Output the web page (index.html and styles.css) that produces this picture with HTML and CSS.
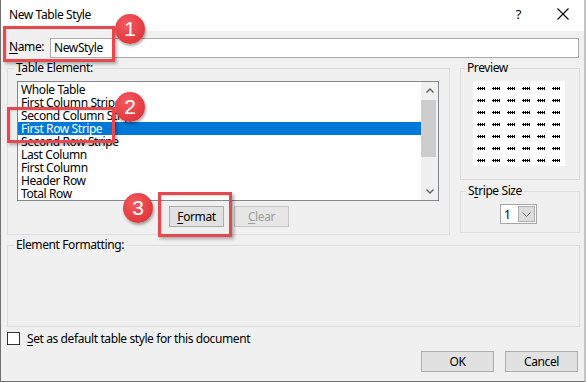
FILE: index.html
```html
<!DOCTYPE html>
<html lang="en">
<head>
    <meta charset="UTF-8">
    <title>New Table Style</title>
    <link rel="stylesheet" href="styles.css">
</head>
<body>
    <div class="dialog">
        <div class="titlebar">
            <span class="title">New Table Style</span>
            <span class="help">?</span>
            <svg class="close" width="12" height="12" viewBox="0 0 12 12">
                <path d="M0.5 0.5 L11.5 11.5 M11.5 0.5 L0.5 11.5" stroke="#000" stroke-width="1.1" fill="none"/>
            </svg>
        </div>

        <div class="content">
            <div class="name-row">
                <label class="name-label"><u>N</u>ame:</label>
                <div class="textbox">NewStyle</div>
            </div>

            <div class="middle">
                <fieldset class="group table-group">
                    <legend><u>T</u>able Element:</legend>
                    <div class="listbox">
                        <ul class="items">
                            <li>Whole Table</li>
                            <li>First Column Stripe</li>
                            <li>Second Column Stripe</li>
                            <li class="selected">First Row Stripe</li>
                            <li>Second Row Stripe</li>
                            <li>Last Column</li>
                            <li>First Column</li>
                            <li>Header Row</li>
                            <li>Total Row</li>
                        </ul>
                        <div class="scrollbar">
                            <div class="scroll-btn">
                                <svg width="8" height="5" viewBox="0 0 8 5"><path d="M0.5 4.5 L4 1 L7.5 4.5" stroke="#606060" stroke-width="1.4" fill="none"/></svg>
                            </div>
                            <div class="thumb"></div>
                            <div class="scroll-btn bottom">
                                <svg width="8" height="5" viewBox="0 0 8 5"><path d="M0.5 0.5 L4 4 L7.5 0.5" stroke="#606060" stroke-width="1.4" fill="none"/></svg>
                            </div>
                        </div>
                    </div>
                    <div class="list-buttons">
                        <button class="btn small"><u>F</u>ormat</button>
                        <button class="btn small disabled"><u>C</u>lear</button>
                    </div>
                </fieldset>

                <div class="side">
                    <fieldset class="group preview-group">
                        <legend>Preview</legend>
                        <div class="preview">
                            <i></i><i></i><i></i><i></i><i></i><i></i>
                            <i></i><i></i><i></i><i></i><i></i><i></i>
                            <i></i><i></i><i></i><i></i><i></i><i></i>
                            <i></i><i></i><i></i><i></i><i></i><i></i>
                            <i></i><i></i><i></i><i></i><i></i><i></i>
                            <i></i><i></i><i></i><i></i><i></i><i></i>
                            <i></i><i></i><i></i><i></i><i></i><i></i>
                        </div>
                    </fieldset>
                    <fieldset class="group stripe-group">
                        <legend>S<u>t</u>ripe Size</legend>
                        <div class="combo">
                            <span class="combo-value">1</span>
                            <span class="combo-btn">
                                <svg width="9" height="5" viewBox="0 0 9 5"><path d="M0.5 0.5 L4.5 4.5 L8.5 0.5" stroke="#606060" stroke-width="1" fill="none"/></svg>
                            </span>
                        </div>
                    </fieldset>
                </div>
            </div>

            <fieldset class="group format-group">
                <legend>Element Formatting:</legend>
            </fieldset>

            <div class="check-row">
                <span class="checkbox"></span>
                <span><u>S</u>et as default table style for this document</span>
            </div>

            <div class="actions">
                <button class="btn wide">OK</button>
                <button class="btn wide">Cancel</button>
            </div>
        </div>

        <!-- callouts -->
        <div class="callout-box box-1"></div>
        <div class="callout-box box-2"></div>
        <div class="callout-box box-3"></div>
        <div class="badge badge-1">1</div>
        <div class="badge badge-2">2</div>
        <div class="badge badge-3">3</div>
    </div>
</body>
</html>
```

FILE: styles.css
```css
body {
    margin: 0;
    padding: 0;
    background-color: #f0f0f0;
}

.dialog {
    position: relative;
    width: 586px;
    height: 382px;
    box-sizing: border-box;
    background-color: #f0f0f0;
    border-left: 1px solid #707070;
    border-bottom: 1px solid #707070;
    border-right: 2px solid #c4c4c4;
    font-family: "Noto Sans", "DejaVu Sans", sans-serif;
    font-size: 12px;
    letter-spacing: -0.4px;
    color: #000;
    overflow: hidden;
}

.titlebar {
    display: flex;
    align-items: center;
    height: 31px;
    box-sizing: border-box;
    padding: 0 0 3px 8px;
    background-color: #fff;
}

.title {
    flex: 1;
    font-size: 12px;
}

.help {
    margin-right: 36px;
    font-size: 13px;
}

.close {
    margin-right: 15px;
}

.content {
    padding: 0 4px 0 6px;
}

u {
    text-decoration: underline;
    text-underline-offset: 2px;
}

/* Name row */
.name-row {
    display: flex;
    align-items: center;
    height: 20px;
    margin-top: 7px;
}

.name-label {
    flex: 0 0 43px;
    box-sizing: border-box;
    padding-left: 2px;
    margin-top: -3px;
}

.textbox {
    flex: 1;
    height: 20px;
    box-sizing: border-box;
    margin-right: 1px;
    padding-left: 3px;
    line-height: 18px;
    background: #fff;
    border: 1px solid #acacac;
}

/* Group boxes */
.group {
    margin: 0;
    padding: 0;
    min-width: 0;
    border: 1px solid #dcdcdc;
    box-sizing: border-box;
}

.group legend {
    padding: 0 2px;
    line-height: 16px;
    margin-left: 6px;
}

.middle {
    display: flex;
    gap: 10px;
    margin-top: 2px;
}

.table-group {
    width: 443px;
    padding: 5px 10px 7px 0;
}

.listbox {
    display: flex;
    height: 120px;
    margin-left: 9px;
    box-sizing: border-box;
    background: #fff;
    border: 1px solid #828790;
}

.items {
    flex: 1;
    list-style: none;
    margin: 0;
    padding: 1px 0 0 0;
}

.items li {
    height: 13px;
    line-height: 13px;
    padding-left: 3px;
    white-space: nowrap;
}

.items li.selected {
    background-color: #0078d7;
    color: #fff;
}

.scrollbar {
    display: flex;
    flex-direction: column;
    width: 17px;
    background-color: #f0f0f0;
}

.scroll-btn {
    display: flex;
    align-items: center;
    justify-content: center;
    height: 17px;
}

.scroll-btn.bottom {
    margin-top: auto;
}

.thumb {
    height: 57px;
    margin: 1px 2px 0 0;
    background-color: #cdcdcd;
}

.list-buttons {
    display: flex;
    gap: 10px;
    margin-top: 5px;
    padding-left: 161px;
}

.btn {
    height: 21px;
    box-sizing: border-box;
    padding: 0;
    font-family: inherit;
    font-size: 12px;
    letter-spacing: -0.4px;
    color: #000;
    background-color: #e1e1e1;
    border: 1px solid #adadad;
}

.btn.small {
    width: 55px;
}

.btn.wide {
    width: 73px;
}

.btn.disabled {
    color: #a0a0a0;
    background-color: #e6e6e6;
    border-color: #c6c6c6;
}

/* Right column */
.side {
    display: flex;
    flex-direction: column;
    gap: 3px;
    width: 120px;
}

.preview-group {
    padding: 5px 0 13px;
}

.preview-group legend {
    margin-left: 4px;
}

.preview {
    display: grid;
    grid-template-columns: repeat(6, 8px);
    grid-template-rows: repeat(7, 4px);
    column-gap: 7px;
    row-gap: 8px;
    width: 92px;
    height: 85px;
    box-sizing: border-box;
    margin-left: 12px;
    padding: 5px 5px 4px 4px;
    background-color: #fff;
}

/* tiny dithered marks of the table preview */
.preview i {
    height: 3px;
    margin-top: 1px;
    background:
        linear-gradient(#000, #000) 0 1px / 100% 1px no-repeat,
        repeating-conic-gradient(#000 0 25%, transparent 0 50%) 0 0 / 2px 2px;
}

.stripe-group {
    padding: 5px 0 8px;
}

.stripe-group legend {
    margin-left: 5px;
}

.combo {
    display: flex;
    align-items: center;
    width: 37px;
    height: 20px;
    box-sizing: border-box;
    margin-left: 39px;
    background: #fff;
    border: 1px solid #a6a6a6;
}

.combo-value {
    flex: 1;
    padding-left: 3px;
}

.combo-btn {
    display: flex;
    align-items: center;
    justify-content: center;
    width: 17px;
    height: 16px;
    box-sizing: border-box;
    margin-right: 1px;
    background-color: #dcdcdc;
    border: 1px solid #adadad;
}

/* Element formatting */
.format-group {
    height: 90px;
    margin-top: 2px;
}

.check-row {
    display: flex;
    align-items: center;
    gap: 7px;
    height: 13px;
    margin-top: 5px;
    line-height: 13px;
}

.checkbox {
    width: 13px;
    height: 13px;
    box-sizing: border-box;
    background: #fff;
    border: 1px solid #333;
}

.actions {
    display: flex;
    justify-content: flex-end;
    gap: 11px;
    margin-top: 6px;
    padding-right: 2px;
}

/* Red callouts drawn over the dialog */
.callout-box {
    position: absolute;
    box-sizing: border-box;
    border: 3px solid #e7484e;
    box-shadow: 2px 2px 3px rgba(0, 0, 0, 0.3),
                inset 1px 1px 2px rgba(0, 0, 0, 0.15);
}

.box-1 { left: 2px; top: 26px; width: 112px; height: 36px; }
.box-2 { left: 6px; top: 107px; width: 108px; height: 36px; }
.box-3 { left: 157px; top: 192px; width: 74px; height: 45px; }

.badge {
    position: absolute;
    width: 30px;
    height: 30px;
    border-radius: 50%;
    background: radial-gradient(circle at 40% 35%, #f45a5f, #e0393f 70%, #c93036);
    box-shadow: 1px 2px 3px rgba(0, 0, 0, 0.35);
    color: #fff;
    font-family: "Liberation Sans", Arial, sans-serif;
    font-size: 21px;
    letter-spacing: 0;
    line-height: 30px;
    text-align: center;
}

.badge-1 { left: 114px; top: 14px; }
.badge-2 { left: 114px; top: 92px; }
.badge-3 { left: 122px; top: 193px; }
```
